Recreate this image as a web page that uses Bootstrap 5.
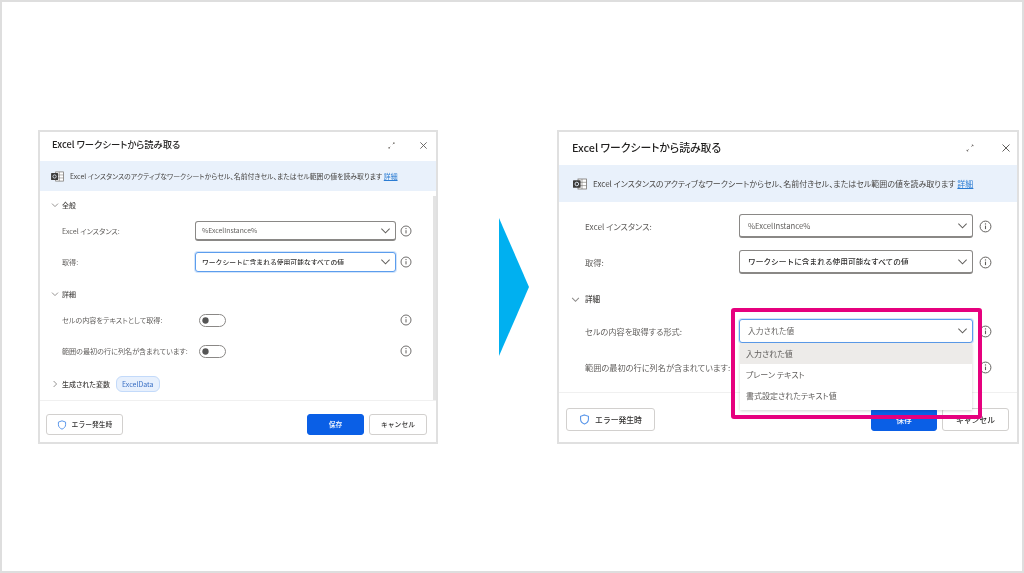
<!DOCTYPE html>
<html lang="ja">
<head>
<meta charset="utf-8">
<title>Excel ワークシートから読み取る</title>
<link href="https://cdn.jsdelivr.net/npm/bootstrap@5.3.0/dist/css/bootstrap.min.css" rel="stylesheet">
<style>
html,body{margin:0;height:573px;overflow:hidden;background:#fff}
body{font-family:"Noto Sans CJK JP","Noto Sans",sans-serif;font-feature-settings:"palt";color:#323130}
.canvas{width:1024px;height:573px;border:2px solid #dedede;padding-top:128px;filter:blur(.55px)}
.dlg{height:314px;border:2px solid #e0e0e0;background:#fff;flex:none;position:relative}
.dlg-a{width:400px;margin-left:36px}
.dlg-b{width:462px;margin-left:28px}
.arrow{width:30px;height:138px;margin:88px 0 0 61px;flex:none}
.dlg-head{padding-left:12px;font-weight:500;color:#201f1e}
.dlg-a .dlg-head{height:29px;font-size:9.3px;padding-bottom:3px;padding-right:8px}
.dlg-b .dlg-head{height:33px;font-size:10.8px;padding-left:13px;padding-bottom:2px;padding-right:6px}
.hd-tools{color:#605e5c}
.dlg-a .hd-tools{gap:23px}
.dlg-b .hd-tools{gap:26px}
.band{background:#e9f1fb;color:#484644;white-space:nowrap}
.dlg-a .band{height:30px;font-size:6.9px;padding-left:11px;gap:6px}
.dlg-b .band{height:37px;font-size:8px;padding-left:14px;gap:6px}
.band a{color:#2b7cd3}
.dlg-a .pane{padding:6px 0 0 11px;height:209px;position:relative}
.dlg-b .pane{padding:12px 0 0 12px;height:225px;position:relative}
.scrolltrack{position:absolute;right:0;top:5px;bottom:0;width:3px;background:#e3e3e3}
.sect{height:16px;font-weight:500;color:#484644;gap:3px}
.dlg-a .sect{font-size:7px}
.dlg-b .sect{font-size:7.6px;gap:5px}
.dlg-a .line{padding-left:11px;height:20px}
.dlg-b .line{padding-left:13px;height:24px}
.lbl{flex:none;white-space:nowrap;color:#605e5c}
.dlg-a .lbl{width:133px;font-size:7.1px}
.dlg-b .lbl{width:155px;font-size:8.2px;padding-left:1px}
.pick{flex:none;position:relative}
.dlg-a .pick{width:201px;height:20px}
.dlg-b .pick{width:234px;height:24px}
select.form-select.sel{height:100%;padding:0 20px 0 6px;font-size:6.8px;font-weight:500;line-height:1;border:1px solid #8a8886;border-bottom-width:2px;border-radius:3px;color:#323130;background-image:url("data:image/svg+xml,%3csvg xmlns='http://www.w3.org/2000/svg' viewBox='0 0 12 8'%3e%3cpath d='M1.5 1.5L6 6l4.5-4.5' fill='none' stroke='%23605e5c' stroke-width='1.1'/%3e%3c/svg%3e");background-size:11px 8px;background-position:right 4px center;font-family:inherit;box-shadow:none}
.dlg-b select.form-select.sel{font-size:7.7px;padding-left:8px}
select.form-select.sel.on{border:1px solid #5c9ded;box-shadow:0 0 0 1px #d3e5fb}
select.form-select.sel.dim{color:#605e5c;font-weight:400}
.tip{flex:none;display:block}
.dlg-a .tip{margin-left:4px;width:12px;height:12px}
.dlg-b .tip{margin-left:6px;width:13px;height:13px}
.swz{margin:0;padding:0;min-height:0;height:13px;line-height:0;flex:none;width:201px}
.swz .form-check-input{margin:0 0 0 4px;width:27px;height:13px;border:1.5px solid #8a8886;background-image:url("data:image/svg+xml,%3csvg xmlns='http://www.w3.org/2000/svg' viewBox='-4 -4 8 8'%3e%3ccircle r='2.3' fill='%23555'/%3e%3c/svg%3e");background-position:left center;box-shadow:none}
.chip{height:16px;padding:0 5px;margin-left:3px;font-size:7px;background:#e7f0fd;border:1px solid #c3dafa;border-radius:6px;color:#3a6fc4;font-weight:400}
.foot{position:absolute;left:0;right:0;bottom:0;border-top:1px solid #f0f0f0;background:#fff;font-weight:500}
.dlg-a .foot{height:42px;padding:13px 9px 0 6px}
.dlg-b .foot{height:50px;padding:15px 8px 0 7px}
.act{font-size:6.8px;height:21px;padding:0;border:1.5px solid #d2d0ce;border-radius:3px;background:#fff;color:#323130;font-weight:500;line-height:1;gap:5px;font-family:inherit}
.dlg-b .act{font-size:7.8px;height:23px}
.act.prim{background:#0a5fe6;border-color:#0a5fe6;color:#fff}
.dlg-a .w-err{width:77px}.dlg-a .w-sv{width:57px}.dlg-a .w-cn{width:58px}
.dlg-b .w-err{width:89px}.dlg-b .w-sv{width:66px}.dlg-b .w-cn{width:67px}
.btnpair{gap:5px}
.menu-pop{position:absolute;left:1px;right:1px;top:100%;height:67px;background:#fff;border-radius:0;border:0;box-shadow:0 1px 3px rgba(0,0,0,.18);z-index:5}
.menu-pop .list-group-item{height:21px;padding:0 6px;border:0;background:#fff;font-size:8px;color:#605e5c;display:flex;align-items:center}
.menu-pop .list-group-item.cur{background:#edebe9}
.hilite{position:absolute;left:-8px;right:-9px;top:-11px;bottom:-76px;border:4px solid #e6007e;border-radius:3px;z-index:6;pointer-events:none}
.raised{z-index:4}
.gap11{margin-top:11px}.sp12{margin-top:12px}.sp14{margin-top:14px}.sp15{margin-top:15px}.sp17{margin-top:17px}
</style>
</head>
<body>
<svg width="0" height="0" class="position-absolute">
<symbol id="i-tip" viewBox="0 0 12 12"><circle cx="6" cy="6" r="5" fill="none" stroke="#605e5c" stroke-width=".9"/><path d="M6 5.2v3.2" stroke="#605e5c" stroke-width="1"/><circle cx="6" cy="3.6" r=".65" fill="#605e5c"/></symbol>
<symbol id="i-close" viewBox="0 0 10 10"><path d="M1.5 1.5l7 7M8.5 1.5l-7 7" stroke="#605e5c" stroke-width="1" fill="none"/></symbol>
<symbol id="i-exp" viewBox="0 0 10 10"><path d="M2 8l1.6-1.6M6.4 3.6L8 2M6.8 2H8v1.2M2 6.8V8h1.2" stroke="#77736f" stroke-width=".9" fill="none"/></symbol>
<symbol id="i-xl" viewBox="0 0 14 12"><rect x="5" y="1" width="8.5" height="10" fill="#fff" stroke="#77736f" stroke-width=".8"/><path d="M9 1v10M5 4.3h8.5M5 7.6h8.5" stroke="#77736f" stroke-width=".6"/><rect x="0" y="2.2" width="7.6" height="7.6" rx=".6" fill="#3b3a39"/><circle cx="3.8" cy="6" r="1.8" fill="none" stroke="#e9f1fb" stroke-width=".9"/></symbol>
<symbol id="i-down" viewBox="0 0 8 8"><path d="M1 2.6l3 3 3-3" stroke="#8a8886" stroke-width=".9" fill="none"/></symbol>
<symbol id="i-right" viewBox="0 0 8 8"><path d="M2.6 1l3 3-3 3" stroke="#8a8886" stroke-width=".9" fill="none"/></symbol>
<symbol id="i-shield" viewBox="0 0 12 12"><path d="M6 1l4.3 1.5v3.2c0 2.6-1.9 4.3-4.3 5.3-2.4-1-4.3-2.7-4.3-5.3V2.5z" fill="#fff" stroke="#5b97ea" stroke-width="1.2"/></symbol>
</svg>
<div class="canvas d-flex align-items-start">

  <section class="dlg dlg-a">
    <header class="dlg-head d-flex align-items-center justify-content-between">
      <span>Excel ワークシートから読み取る</span>
      <span class="hd-tools d-flex align-items-center">
        <svg width="9" height="9"><use href="#i-exp"/></svg>
        <svg width="9" height="9"><use href="#i-close"/></svg>
      </span>
    </header>
    <div class="band d-flex align-items-center">
      <svg width="13" height="11"><use href="#i-xl"/></svg>
      <span>Excel インスタンスのアクティブなワークシートからセル、名前付きセル、またはセル範囲の値を読み取ります <a href="#">詳細</a></span>
    </div>
    <div class="pane">
      <div class="scrolltrack"></div>
      <div class="sect d-flex align-items-center"><svg width="8" height="8"><use href="#i-down"/></svg><span>全般</span></div>
      <div class="line d-flex align-items-center mt-2"><span class="lbl">Excel インスタンス:</span><div class="pick"><select class="form-select sel dim"><option>%ExcelInstance%</option></select></div><svg class="tip"><use href="#i-tip"/></svg></div>
      <div class="line d-flex align-items-center gap11"><span class="lbl">取得:</span><div class="pick"><select class="form-select sel on"><option>ワークシートに含まれる使用可能なすべての値</option></select></div><svg class="tip"><use href="#i-tip"/></svg></div>
      <div class="sect d-flex align-items-center sp14"><svg width="8" height="8"><use href="#i-down"/></svg><span>詳細</span></div>
      <div class="line d-flex align-items-center mt-2"><span class="lbl">セルの内容をテキストとして取得:</span><div class="form-check form-switch swz"><input class="form-check-input" type="checkbox" role="switch" aria-label="セルの内容をテキストとして取得"></div><svg class="tip"><use href="#i-tip"/></svg></div>
      <div class="line d-flex align-items-center gap11"><span class="lbl">範囲の最初の行に列名が含まれています:</span><div class="form-check form-switch swz"><input class="form-check-input" type="checkbox" role="switch" aria-label="範囲の最初の行に列名が含まれています"></div><svg class="tip"><use href="#i-tip"/></svg></div>
      <div class="sect d-flex align-items-center sp15"><svg width="8" height="8"><use href="#i-right"/></svg><span>生成された変数</span><span class="chip d-inline-flex align-items-center">ExcelData</span></div>
    </div>
    <footer class="foot d-flex justify-content-between">
      <button type="button" class="btn act w-err d-flex align-items-center justify-content-center"><svg width="10" height="10"><use href="#i-shield"/></svg>エラー発生時</button>
      <div class="d-flex btnpair">
        <button type="button" class="btn act prim w-sv">保存</button>
        <button type="button" class="btn act w-cn">キャンセル</button>
      </div>
    </footer>
  </section>

  <svg class="arrow" viewBox="0 0 30 138" aria-hidden="true"><path d="M0 0L30 69 0 138z" fill="#00b0f0"/></svg>

  <section class="dlg dlg-b">
    <header class="dlg-head d-flex align-items-center justify-content-between">
      <span>Excel ワークシートから読み取る</span>
      <span class="hd-tools d-flex align-items-center">
        <svg width="10" height="10"><use href="#i-exp"/></svg>
        <svg width="10" height="10"><use href="#i-close"/></svg>
      </span>
    </header>
    <div class="band d-flex align-items-center">
      <svg width="14" height="12"><use href="#i-xl"/></svg>
      <span>Excel インスタンスのアクティブなワークシートからセル、名前付きセル、またはセル範囲の値を読み取ります <a href="#">詳細</a></span>
    </div>
    <div class="pane">
      <div class="line d-flex align-items-center"><span class="lbl">Excel インスタンス:</span><div class="pick"><select class="form-select sel dim"><option>%ExcelInstance%</option></select></div><svg class="tip"><use href="#i-tip"/></svg></div>
      <div class="line d-flex align-items-center sp12"><span class="lbl">取得:</span><div class="pick"><select class="form-select sel"><option>ワークシートに含まれる使用可能なすべての値</option></select></div><svg class="tip"><use href="#i-tip"/></svg></div>
      <div class="sect d-flex align-items-center sp17"><svg width="9" height="9"><use href="#i-down"/></svg><span>詳細</span></div>
      <div class="line d-flex align-items-center sp12"><span class="lbl">セルの内容を取得する形式:</span>
        <div class="pick raised">
          <select class="form-select sel on dim"><option>入力された値</option></select>
          <ul class="list-group menu-pop">
            <li class="list-group-item cur">入力された値</li>
            <li class="list-group-item">プレーン テキスト</li>
            <li class="list-group-item">書式設定されたテキスト値</li>
          </ul>
          <div class="hilite"></div>
        </div>
        <svg class="tip"><use href="#i-tip"/></svg></div>
      <div class="line d-flex align-items-center sp12"><span class="lbl">範囲の最初の行に列名が含まれています:</span><div class="pick"></div><svg class="tip"><use href="#i-tip"/></svg></div>
    </div>
    <footer class="foot d-flex justify-content-between">
      <button type="button" class="btn act w-err d-flex align-items-center justify-content-center"><svg width="11" height="11"><use href="#i-shield"/></svg>エラー発生時</button>
      <div class="d-flex btnpair">
        <button type="button" class="btn act prim w-sv">保存</button>
        <button type="button" class="btn act w-cn">キャンセル</button>
      </div>
    </footer>
  </section>
</div>
<script src="https://cdn.jsdelivr.net/npm/bootstrap@5.3.0/dist/js/bootstrap.bundle.min.js"></script>
</body>
</html>
